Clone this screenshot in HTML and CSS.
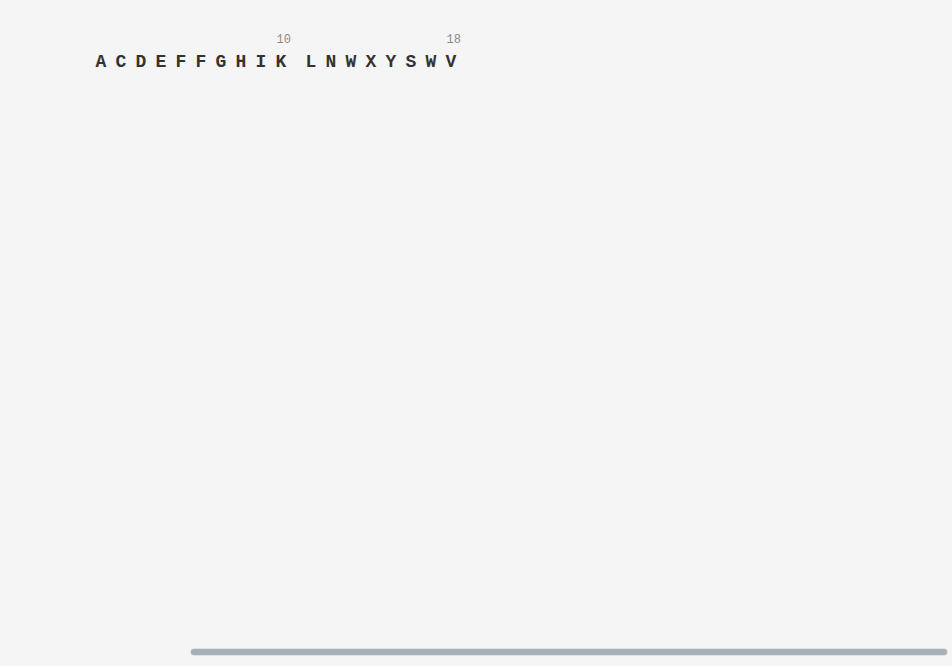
FILE: index.html
```html
<!DOCTYPE html>
<html lang="en">
<head>
<meta charset="utf-8">
<title>Sequence</title>
<link rel="stylesheet" href="styles.css">
</head>
<body>
<div class="viewport">
  <div class="seq">
    <div class="group">
      <div class="cell"><span class="num"></span><span class="res">A</span></div>
      <div class="cell"><span class="num"></span><span class="res">C</span></div>
      <div class="cell"><span class="num"></span><span class="res">D</span></div>
      <div class="cell"><span class="num"></span><span class="res">E</span></div>
      <div class="cell"><span class="num"></span><span class="res">F</span></div>
      <div class="cell"><span class="num"></span><span class="res">F</span></div>
      <div class="cell"><span class="num"></span><span class="res">G</span></div>
      <div class="cell"><span class="num"></span><span class="res">H</span></div>
      <div class="cell"><span class="num"></span><span class="res">I</span></div>
      <div class="cell"><span class="num">10</span><span class="res">K</span></div>
    </div>
    <div class="group">
      <div class="cell"><span class="num"></span><span class="res">L</span></div>
      <div class="cell"><span class="num"></span><span class="res">N</span></div>
      <div class="cell"><span class="num"></span><span class="res">W</span></div>
      <div class="cell"><span class="num"></span><span class="res">X</span></div>
      <div class="cell"><span class="num"></span><span class="res">Y</span></div>
      <div class="cell"><span class="num"></span><span class="res">S</span></div>
      <div class="cell"><span class="num"></span><span class="res">W</span></div>
      <div class="cell"><span class="num">18</span><span class="res">V</span></div>
    </div>
  </div>
  <div class="track"><div class="thumb"></div></div>
</div>
</body>
</html>
```

FILE: styles.css
```css
html, body {
  margin: 0;
  padding: 0;
  background: #f5f5f5;
}

.viewport {
  height: 100vh;
  display: flex;
  flex-direction: column;
  font-family: "Liberation Mono", "DejaVu Sans Mono", monospace;
}

.seq {
  display: flex;
  gap: 10px;
  padding: 33px 0 0 91px;
}

.group {
  display: flex;
}

.cell {
  width: 20px;
  display: flex;
  flex-direction: column;
}

.num {
  height: 14px;
  line-height: 14px;
  font-size: 12px;
  color: #8a8a8a;
  text-align: right;
  margin-bottom: 4px;
}

.res {
  height: 22px;
  line-height: 22px;
  font-size: 18px;
  font-weight: bold;
  color: #333333;
  text-align: center;
}

.track {
  margin-top: auto;
  padding: 0 5px 11px 191px;
}

.thumb {
  height: 6px;
  border-radius: 3px;
  background: #a8b0b8;
  box-shadow: 0 0 0 0.5px #c9ced3;
}
```
